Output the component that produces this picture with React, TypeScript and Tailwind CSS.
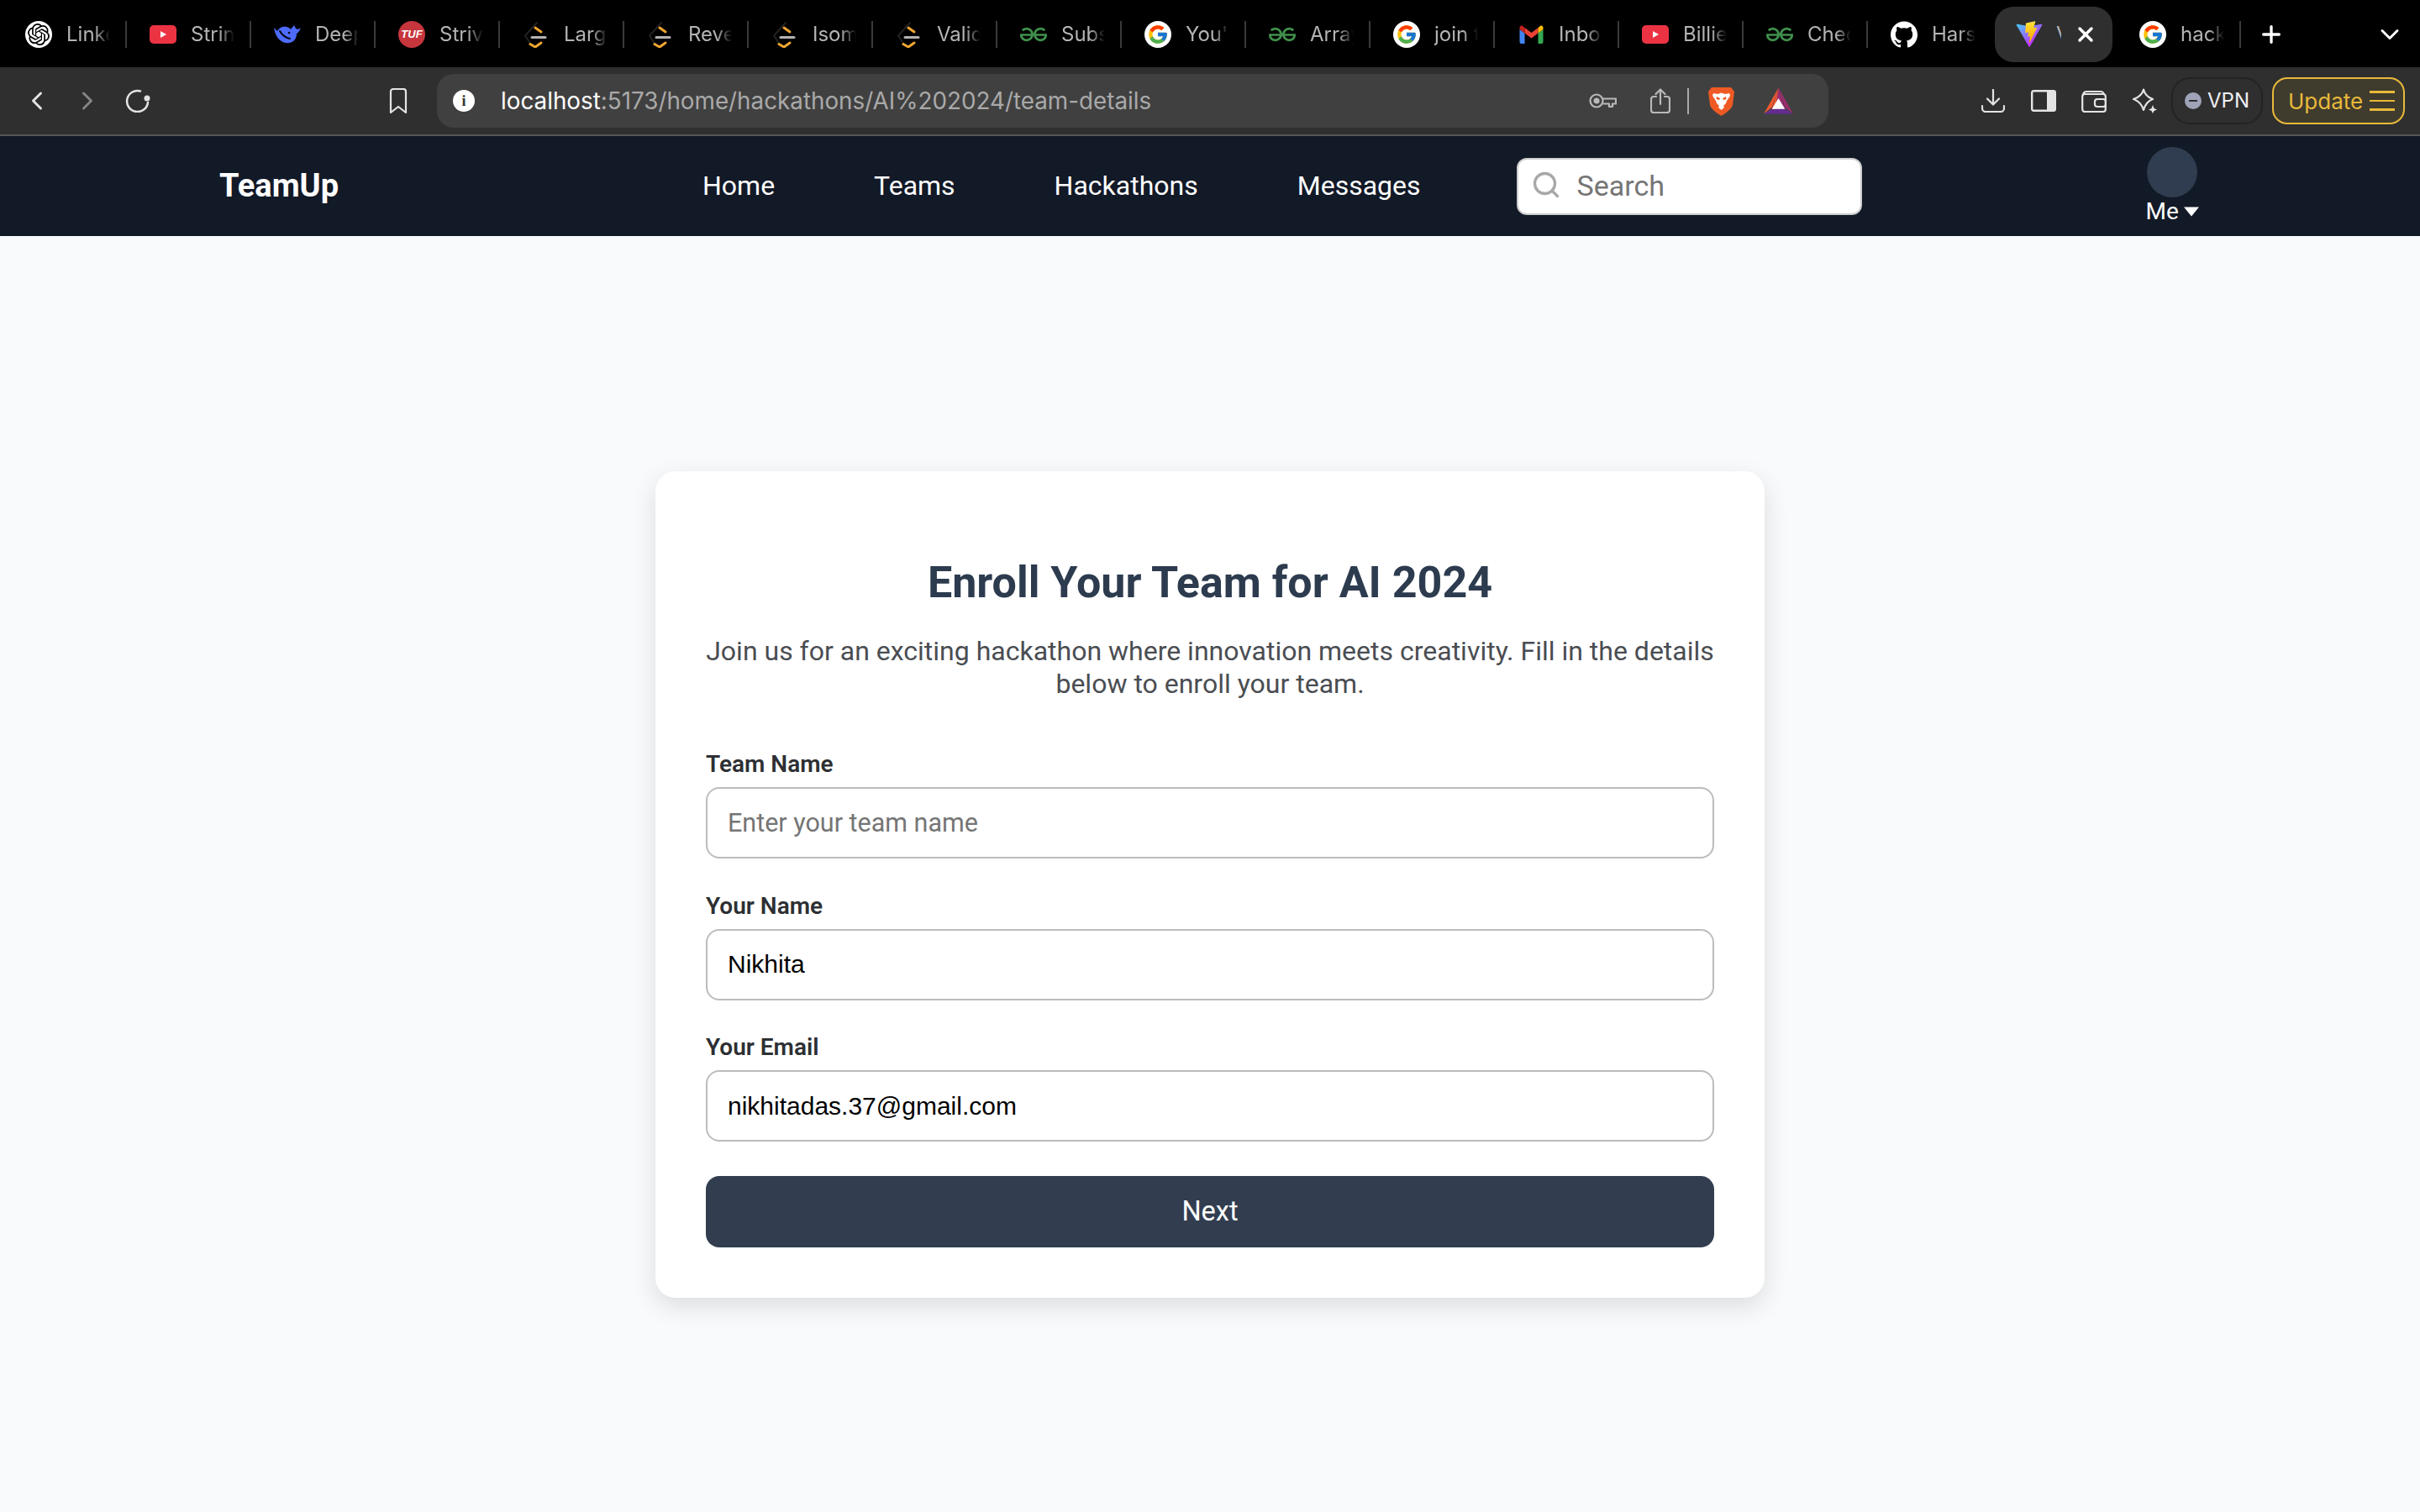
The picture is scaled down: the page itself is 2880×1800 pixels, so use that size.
import { useState, type ReactNode } from 'react'
import { SiOpenai, SiGeeksforgeeks, SiGithub } from 'react-icons/si'
import { FcGoogle } from 'react-icons/fc'
import { Search, ChevronLeft, ChevronRight, Plus, ChevronDown, X } from 'lucide-react'

function OpenAiIcon() {
  return (
    <div className="w-8 h-8 rounded-full bg-white flex items-center justify-center">
      <SiOpenai className="w-[26px] h-[26px] text-black" />
    </div>
  )
}

function YoutubeIcon() {
  return (
    <svg viewBox="0 0 32 22" className="w-8 h-[22px]">
      <rect width="32" height="22" rx="5" fill="#ec3343" />
      <path d="M13 7l7 4-7 4z" fill="#fff" />
    </svg>
  )
}

function DeepseekIcon() {
  return (
    <svg viewBox="0 0 32 22" className="w-8 h-[22px]" fill="none">
      <path
        d="M0 3C1 10 4 16 9 19C13 22 19 22 23 19C26 17 27 13 27 10C29 9 31 6 32 3C30 5 28 5 26 4L24 0C23 2 21 3 20 5C19 3 14 1 10 2C7 3 5 5 4 7C3 6 1 4 0 3Z"
        fill="#4d6bfe"
      />
      <path d="M7 7C10 12 14 15 19 16" stroke="#000" strokeWidth="2" strokeLinecap="round" />
      <circle cx="18" cy="9" r="1.3" fill="#000" />
    </svg>
  )
}

function TufIcon() {
  return (
    <div className="w-8 h-8 rounded-full bg-[#c7363d] flex items-center justify-center">
      <span className="font-['Liberation_Sans',sans-serif] text-[13px] font-bold italic text-white">TUF</span>
    </div>
  )
}

function LeetcodeIcon() {
  return (
    <svg viewBox="0 0 32 32" className="w-8 h-8" fill="none" strokeLinecap="round" strokeLinejoin="round">
      <path d="M17 2L3 17.5L10 28" stroke="#222" strokeWidth="2" />
      <path d="M15 8L22 13" stroke="#f0a531" strokeWidth="3" />
      <path d="M9 27.5L15 31L22 26" stroke="#f0a531" strokeWidth="3" />
      <path d="M11 19.5H27" stroke="#b3b3b3" strokeWidth="3" />
    </svg>
  )
}

function GfgIcon() {
  return <SiGeeksforgeeks className="w-8 h-8 text-[#3f8f4b]" />
}

function GoogleIcon() {
  return (
    <div className="w-8 h-8 rounded-full bg-white flex items-center justify-center">
      <FcGoogle className="w-[26px] h-[26px]" />
    </div>
  )
}

function GmailIcon() {
  return (
    <svg viewBox="0 0 28 22" className="w-[29px] h-[22px]">
      <path d="M0 5L6 9.5V22H2a2 2 0 0 1-2-2Z" fill="#4285f4" />
      <path d="M28 5L22 9.5V22H26a2 2 0 0 0 2-2Z" fill="#34a853" />
      <path d="M6 9.5V3L14 9L22 3V9.5L14 15.5Z" fill="#ea4335" />
      <path d="M22 3L24.5 1C26 0 28 1 28 3V5L22 9.5Z" fill="#fbbc04" />
      <path d="M6 3L3.5 1C2 0 0 1 0 3V5L6 9.5Z" fill="#c5221f" />
    </svg>
  )
}

function GithubIcon() {
  return <SiGithub className="w-8 h-8 text-white" />
}

function ViteIcon() {
  return (
    <svg viewBox="0 0 410 404" className="w-8 h-8" fill="none">
      <defs>
        <linearGradient id="viteA" x1="6" y1="33" x2="235" y2="344" gradientUnits="userSpaceOnUse">
          <stop stopColor="#41D1FF" />
          <stop offset="1" stopColor="#BD34FE" />
        </linearGradient>
        <linearGradient id="viteB" x1="194" y1="8" x2="236" y2="292" gradientUnits="userSpaceOnUse">
          <stop stopColor="#FFEA83" />
          <stop offset="0.08" stopColor="#FFDD35" />
          <stop offset="1" stopColor="#FFA800" />
        </linearGradient>
      </defs>
      <path
        d="M399.641 59.5246L215.643 388.545C211.844 395.338 202.084 395.378 198.228 388.618L10.5817 59.5563C6.38087 52.1896 12.6802 43.2665 21.0281 44.7586L205.223 77.6824C206.398 77.8924 207.601 77.8904 208.776 77.6763L389.119 44.8058C397.439 43.2894 403.768 52.1434 399.641 59.5246Z"
        fill="url(#viteA)"
      />
      <path
        d="M292.965 1.5744L156.801 28.2552C154.563 28.6937 152.906 30.5903 152.771 32.8664L144.395 174.33C144.198 177.662 147.258 180.248 150.51 179.498L188.42 170.749C191.967 169.931 195.172 173.055 194.443 176.622L183.18 231.775C182.422 235.487 185.907 238.661 189.532 237.56L212.947 230.446C216.577 229.344 220.065 232.527 219.297 236.242L201.398 322.875C200.278 328.294 207.486 331.249 210.492 326.603L212.5 323.5L323.454 102.072C325.312 98.3645 322.108 94.137 318.036 94.9228L279.014 102.454C275.347 103.161 272.227 99.746 273.262 96.1583L298.731 7.86689C299.767 4.27314 296.636 0.855181 292.965 1.5744Z"
        fill="url(#viteB)"
      />
    </svg>
  )
}

function BraveIcon() {
  return (
    <svg viewBox="0 0 31 35" className="w-[31px] h-[35px]">
      <path d="M4 1H27L31 6L29 22C28 27 20 32 15.5 35C11 32 3 27 2 22L0 6Z" fill="#ef5a24" />
      <path
        d="M6 8L11 9L15.5 7.5L20 9L25 8L26 11L22 17L21 20L18 23L19 25L15.5 28L12 25L13 23L10 20L9 17L5 11Z"
        fill="#fff"
      />
      <path d="M10 12L14 14L13 16L9.5 15ZM21 12L17 14L18 16L21.5 15Z" fill="#ef5a24" />
    </svg>
  )
}

function BatIcon() {
  return (
    <svg viewBox="0 0 36 32" className="w-[35px] h-8">
      <path d="M18 0L0 32L10 24Z" fill="#ee5a2d" />
      <path d="M18 0L36 32L26 24Z" fill="#9b2d6f" />
      <path d="M0 32H36L26 26H10Z" fill="#662d91" />
      <path d="M18 0L10 26H26Z" fill="#9b2d6f" />
      <path d="M18 0L10 26H14Z" fill="#ee5a2d" />
      <path d="M18 13L10 26H26Z" fill="#fff" />
    </svg>
  )
}

type Tab = { icon: ReactNode; title: string; noSep?: boolean }

const tabs: Tab[] = [
  { icon: <OpenAiIcon />, title: 'LinkedIn' },
  { icon: <YoutubeIcon />, title: 'String' },
  { icon: <DeepseekIcon />, title: 'Deepseek' },
  { icon: <TufIcon />, title: 'Striver' },
  { icon: <LeetcodeIcon />, title: 'Largest' },
  { icon: <LeetcodeIcon />, title: 'Reverse' },
  { icon: <LeetcodeIcon />, title: 'Isomorphic' },
  { icon: <LeetcodeIcon />, title: 'Valid' },
  { icon: <GfgIcon />, title: 'Subset' },
  { icon: <GoogleIcon />, title: "You're" },
  { icon: <GfgIcon />, title: 'Array' },
  { icon: <GoogleIcon />, title: 'join the' },
  { icon: <GmailIcon />, title: 'Inbox' },
  { icon: <YoutubeIcon />, title: 'Billie' },
  { icon: <GfgIcon />, title: 'Check' },
  { icon: <GithubIcon />, title: 'Harshit', noSep: true },
]

function TabItem({ icon, title, noSep }: Tab) {
  return (
    <div className="flex items-center w-[148px] h-[32px] shrink-0">
      <div className="w-8 h-8 ml-[27px] flex items-center justify-center shrink-0">{icon}</div>
      <span className="ml-[17px] w-[52px] overflow-hidden whitespace-nowrap text-[24px] text-[#b4b4b4] font-['Inter',sans-serif] [mask-image:linear-gradient(to_right,black_65%,transparent)]">
        {title}
      </span>
      {!noSep && <div className="ml-auto w-[2px] h-[32px] bg-[#3a3a3a] shrink-0" />}
    </div>
  )
}

function BrowserChrome() {
  return (
    <>
      {/* tab strip */}
      <div className="h-20 bg-black flex items-center pl-[3px] pt-[2px]">
        {tabs.map((t, i) => (
          <TabItem key={i} {...t} />
        ))}
        <div className="ml-[3px] w-[140px] h-[66px] rounded-[22px] bg-[#2f2f2f] flex items-center pl-[25px] shrink-0">
          <ViteIcon />
          <span className="ml-[16px] w-[6px] overflow-hidden text-[24px] text-[#b4b4b4] font-['Inter',sans-serif]">V</span>
          <X className="ml-[15px] w-7 h-7 text-white" strokeWidth={3} />
        </div>
        <div className="flex items-center w-[153px] h-[32px] shrink-0">
          <div className="ml-[32px] shrink-0">
            <GoogleIcon />
          </div>
          <span className="ml-[17px] w-[52px] overflow-hidden whitespace-nowrap text-[24px] text-[#b4b4b4] font-['Inter',sans-serif] [mask-image:linear-gradient(to_right,black_65%,transparent)]">
            hackathon
          </span>
          <div className="ml-auto w-[2px] h-[32px] bg-[#3a3a3a] shrink-0" />
        </div>
        <Plus className="ml-[20px] w-8 h-8 text-white" strokeWidth={2.5} />
        <ChevronDown className="ml-[107px] w-9 h-9 text-white" strokeWidth={2} />
      </div>

      {/* toolbar */}
      <div className="h-20 bg-[#2f2f2f] flex items-center">
        <ChevronLeft className="ml-[26px] w-9 h-9 text-[#e4e4e4]" strokeWidth={2} />
        <ChevronRight className="ml-[24px] w-9 h-9 text-[#858585]" strokeWidth={2} />
        <svg viewBox="0 0 30 28" className="ml-[27px] w-[30px] h-7" fill="none">
          <path d="M18 2.5A12.5 12.5 0 1 0 27 16" stroke="#e4e4e4" strokeWidth="2.5" strokeLinecap="round" />
          <circle cx="26" cy="11" r="3.5" fill="#e4e4e4" />
        </svg>
        <svg viewBox="0 0 22 30" className="ml-[284px] w-[22px] h-[30px]" fill="none">
          <path d="M2 4a3 3 0 0 1 3-3h12a3 3 0 0 1 3 3v25l-9-7-9 7Z" stroke="#e4e4e4" strokeWidth="2.2" strokeLinejoin="round" />
        </svg>

        <div className="ml-[35px] w-[1656px] h-16 rounded-[20px] bg-[#404040] flex items-center">
          <div className="ml-[19px] w-[26px] h-[26px] rounded-full bg-white flex items-center justify-center text-[18px] font-bold text-[#333] font-['Liberation_Serif',serif]">
            i
          </div>
          <div className="ml-[31px] pt-[2px] text-[27.8px] font-['Inter',sans-serif] text-[#a9a9a9] whitespace-nowrap">
            <span className="text-white">localhost</span>:5173/home/hackathons/AI%202024/team-details
          </div>
          <svg viewBox="0 0 33 18" className="ml-auto w-[33px] h-[18px]" fill="none" stroke="#b9b9b9" strokeWidth="2.2">
            <circle cx="9" cy="9" r="7.5" />
            <circle cx="9" cy="9" r="2.5" fill="#b9b9b9" />
            <path d="M16.5 6.5H32V12.5H28V16H24V12.5H16.5" strokeLinejoin="round" />
          </svg>
          <svg viewBox="0 0 24 30" className="ml-[40px] w-6 h-[30px]" fill="none" stroke="#b9b9b9" strokeWidth="2.2" strokeLinecap="round" strokeLinejoin="round">
            <path d="M7 10H4a3 3 0 0 0-3 3v13a3 3 0 0 0 3 3h16a3 3 0 0 0 3-3V13a3 3 0 0 0-3-3h-3" />
            <path d="M12 19V2M6.5 7L12 1.5L17.5 7" />
          </svg>
          <div className="ml-[20px] w-[2px] h-[31px] bg-[#a9a9a9]" />
          <div className="ml-[23px]">
            <BraveIcon />
          </div>
          <div className="ml-[35px] mr-[42px]">
            <BatIcon />
          </div>
        </div>

        <svg viewBox="0 0 28 28" className="ml-[182px] w-7 h-7" fill="none" stroke="#e4e4e4" strokeWidth="2.2" strokeLinecap="round" strokeLinejoin="round">
          <path d="M14 1V18M7 11.5L14 18.5L21 11.5" />
          <path d="M1 20v3a4 4 0 0 0 4 4h18a4 4 0 0 0 4-4v-3" />
        </svg>
        <svg viewBox="0 0 30 26" className="ml-[31px] w-[30px] h-[26px]">
          <rect x="1.2" y="1.2" width="27.6" height="23.6" rx="2" fill="none" stroke="#e4e4e4" strokeWidth="2.4" />
          <rect x="19" y="1" width="10" height="24" fill="#e4e4e4" />
        </svg>
        <svg viewBox="0 0 30 27" className="ml-[30px] w-[30px] h-[27px]" fill="none" stroke="#e4e4e4" strokeWidth="2.2" strokeLinejoin="round">
          <path d="M2 6a4 4 0 0 1 4-4h17a4 4 0 0 1 4 4" />
          <rect x="1.2" y="5" width="27.6" height="21" rx="3" />
          <rect x="16" y="11" width="13" height="9" rx="3" />
        </svg>
        <svg viewBox="0 0 30 30" className="ml-[30px] w-[30px] h-[30px]" fill="none" stroke="#e4e4e4" strokeWidth="2.2" strokeLinejoin="round">
          <path d="M14 1.5C15.5 7.5 19 11 25 13C19 15 16 19 14 26C12 19 8 15 2 13C8 11 12.5 7.5 14 1.5Z" />
          <path d="M25 20L26.5 24L30 25.5L26.5 27L25 30L23.5 27L20 25.5L23.5 24Z" fill="#e4e4e4" stroke="none" />
        </svg>
        <div className="ml-[17px] w-[109px] h-14 rounded-[22px] border-[2px] border-[#232323] flex items-center pl-[14px] shrink-0">
          <div className="w-5 h-5 rounded-full bg-[#9fa3b8] flex items-center justify-center">
            <div className="w-[10px] h-[2.5px] bg-[#2f2f2f]" />
          </div>
          <span className="ml-[7px] text-[24px] font-['Inter',sans-serif] text-[#f0f0f4]">VPN</span>
        </div>
        <div className="ml-[11px] w-[158px] h-14 rounded-[18px] border-[2px] border-[#e8b93a] bg-[#3f3b2d] flex items-center pl-[17px] shrink-0">
          <span className="text-[26px] font-['Inter',sans-serif] text-[#e8b93a]">Update</span>
          <div className="ml-[8px] w-[30px] flex flex-col gap-[8px]">
            <div className="h-[2.5px] bg-[#e8b93a]" />
            <div className="h-[2.5px] bg-[#e8b93a]" />
            <div className="h-[2.5px] bg-[#e8b93a]" />
          </div>
        </div>
      </div>
      <div className="h-[2px] bg-[#565656]" />
    </>
  )
}

function Navbar() {
  const links = ['Home', 'Teams', 'Hackathons', 'Messages']
  return (
    <nav className="h-[119px] bg-[#121927] flex items-center pl-[261px] font-['Roboto',sans-serif] text-white">
      <div className="w-[575px] text-[38px] font-bold shrink-0">TeamUp</div>
      <div className="flex gap-[118px] text-[32px] pb-[2px]">
        {links.map(l => (
          <a key={l} href="#">
            {l}
          </a>
        ))}
      </div>
      <div className="ml-[114px] w-[411px] h-[68px] rounded-[12px] bg-white border-[2px] border-[#cdcdcd] flex items-center shrink-0">
        <Search className="ml-[15px] w-9 h-9 text-[#a8a8a8] mb-[4px]" strokeWidth={2.2} />
        <input
          placeholder="Search"
          className="ml-[19px] w-[300px] text-[34px] text-black placeholder:text-[#757575] outline-none font-['Roboto',sans-serif]"
        />
      </div>
      <div className="ml-[338px] flex flex-col items-center">
        <div className="w-[60px] h-[60px] rounded-full bg-[#303d50]" />
        <div className="flex items-center gap-[6px] text-[28px] leading-[32px] mt-[1px]">
          Me
          <svg viewBox="0 0 18 12" className="w-[18px] h-3">
            <path d="M0 0.5H18L9 11.5Z" fill="#fff" />
          </svg>
        </div>
      </div>
    </nav>
  )
}

function Field({
  label,
  value,
  placeholder,
  onChange,
}: {
  label: string
  value: string
  placeholder?: string
  onChange: (v: string) => void
}) {
  return (
    <div>
      <label className="block text-[28px] leading-[34px] font-semibold text-[#2d2f33] mb-[10px]">{label}</label>
      <input
        value={value}
        placeholder={placeholder}
        onChange={e => onChange(e.target.value)}
        className="w-full h-[85px] rounded-[16px] border-[2px] border-[#bcbcbc] px-6 text-[30px] text-black placeholder:text-[#757575] placeholder:text-[30.5px] outline-none font-['Liberation_Sans',sans-serif] placeholder:font-['Roboto',sans-serif]"
      />
    </div>
  )
}

export default function App() {
  const [teamName, setTeamName] = useState('')
  const [name, setName] = useState('Nikhita')
  const [email, setEmail] = useState('nikhitadas.37@gmail.com')

  return (
    <div className="min-h-screen bg-[#f9fafb] font-['Roboto',sans-serif]">
      <BrowserChrome />
      <Navbar />
      <main className="pt-[280px] pb-[255px] flex justify-center">
        <div className="w-[1320px] h-[984px] bg-white rounded-[24px] shadow-[0_10px_30px_rgba(0,0,0,0.12)] px-[60px] pt-[101px]">
          <h1 className="text-[52px] leading-[64px] font-bold text-[#2d3b4f] text-center">Enroll Your Team for AI 2024</h1>
          <p className="mt-[30px] text-[32px] leading-[38.5px] text-[#4a4d52] text-center">
            Join us for an exciting hackathon where innovation meets creativity. Fill in the details below to enroll your team.
          </p>
          <div className="mt-[60px] flex flex-col gap-[39.5px]">
            <Field label="Team Name" value={teamName} placeholder="Enter your team name" onChange={setTeamName} />
            <Field label="Your Name" value={name} onChange={setName} />
            <Field label="Your Email" value={email} onChange={setEmail} />
          </div>
          <button className="mt-[41px] w-full h-[85px] rounded-[16px] bg-[#323e50] text-white text-[32.5px]">Next</button>
        </div>
      </main>
    </div>
  )
}
